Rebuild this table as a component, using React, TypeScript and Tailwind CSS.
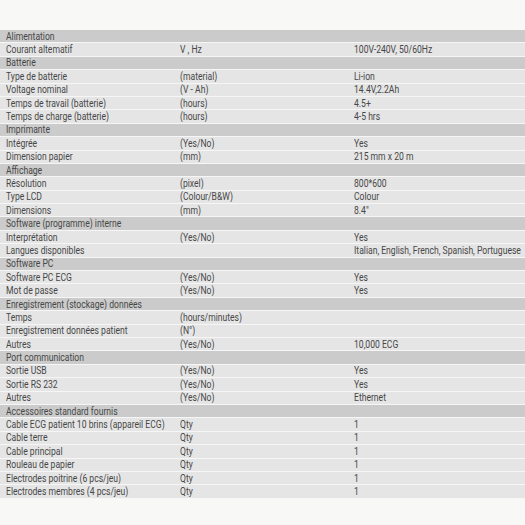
import React from "react";

type Row = { h?: boolean; a: string; b?: string; c?: string };

const rows: Row[] = [
  { h: true, a: "Alimentation" },
  { a: "Courant altematif", b: "V , Hz", c: "100V-240V, 50/60Hz" },
  { h: true, a: "Batterie" },
  { a: "Type de batterie", b: "(material)", c: "Li-ion" },
  { a: "Voltage nominal", b: "(V - Ah)", c: "14.4V,2.2Ah" },
  { a: "Temps de travail (batterie)", b: "(hours)", c: "4.5+" },
  { a: "Temps de charge (batterie)", b: "(hours)", c: "4-5 hrs" },
  { h: true, a: "Imprimante" },
  { a: "Intégrée", b: "(Yes/No)", c: "Yes" },
  { a: "Dimension papier", b: "(mm)", c: "215 mm x 20 m" },
  { h: true, a: "Affichage" },
  { a: "Résolution", b: "(pixel)", c: "800*600" },
  { a: "Type LCD", b: "(Colour/B&W)", c: "Colour" },
  { a: "Dimensions", b: "(mm)", c: "8.4\"" },
  { h: true, a: "Software (programme) interne" },
  { a: "Interprétation", b: "(Yes/No)", c: "Yes" },
  { a: "Langues disponibles", b: "", c: "Italian, English, French, Spanish, Portuguese" },
  { h: true, a: "Software PC" },
  { a: "Software PC ECG", b: "(Yes/No)", c: "Yes" },
  { a: "Mot de passe", b: "(Yes/No)", c: "Yes" },
  { h: true, a: "Enregistrement (stockage) données" },
  { a: "Temps", b: "(hours/minutes)", c: "" },
  { a: "Enregistrement données patient", b: "(N°)", c: "" },
  { a: "Autres", b: "(Yes/No)", c: "10,000 ECG" },
  { h: true, a: "Port communication" },
  { a: "Sortie USB", b: "(Yes/No)", c: "Yes" },
  { a: "Sortie RS 232", b: "(Yes/No)", c: "Yes" },
  { a: "Autres", b: "(Yes/No)", c: "Ethernet" },
  { h: true, a: "Accessoires standard fournis" },
  { a: "Cable ECG patient 10 brins (appareil ECG)", b: "Qty", c: "1" },
  { a: "Cable terre", b: "Qty", c: "1" },
  { a: "Cable principal", b: "Qty", c: "1" },
  { a: "Rouleau de papier", b: "Qty", c: "1" },
  { a: "Electrodes poitrine (6 pcs/jeu)", b: "Qty", c: "1" },
  { a: "Electrodes membres (4 pcs/jeu)", b: "Qty", c: "1" },
];

function T({ children }: { children?: React.ReactNode }) {
  return (
    <span className="inline-block origin-left scale-x-[0.78] whitespace-nowrap">
      {children}
    </span>
  );
}

export default function App() {
  return (
    <div
      className="w-[525px] h-[525px] overflow-hidden bg-[#f8f8f6] pt-[30px] text-[#474747] text-[11px] leading-none"
      style={{ fontFamily: "Roboto, 'Liberation Sans', sans-serif" }}
    >
      <div className="flex flex-col">
        {rows.map((r, i) => (
          <div
            key={i}
            className={`grid grid-cols-[174px_174px_1fr] pl-[6px] h-[13.4px] items-center border-b border-[#f6f6f6] ${
              r.h ? "bg-[#cbcbcb]" : "bg-[#e5e5e5]"
            }`}
          >
            <div className="min-w-0 overflow-hidden">
              <T>{r.a}</T>
            </div>
            <div className="min-w-0 overflow-hidden">
              <T>{r.b}</T>
            </div>
            <div className="min-w-0 overflow-hidden">
              <T>{r.c}</T>
            </div>
          </div>
        ))}
      </div>
    </div>
  );
}
